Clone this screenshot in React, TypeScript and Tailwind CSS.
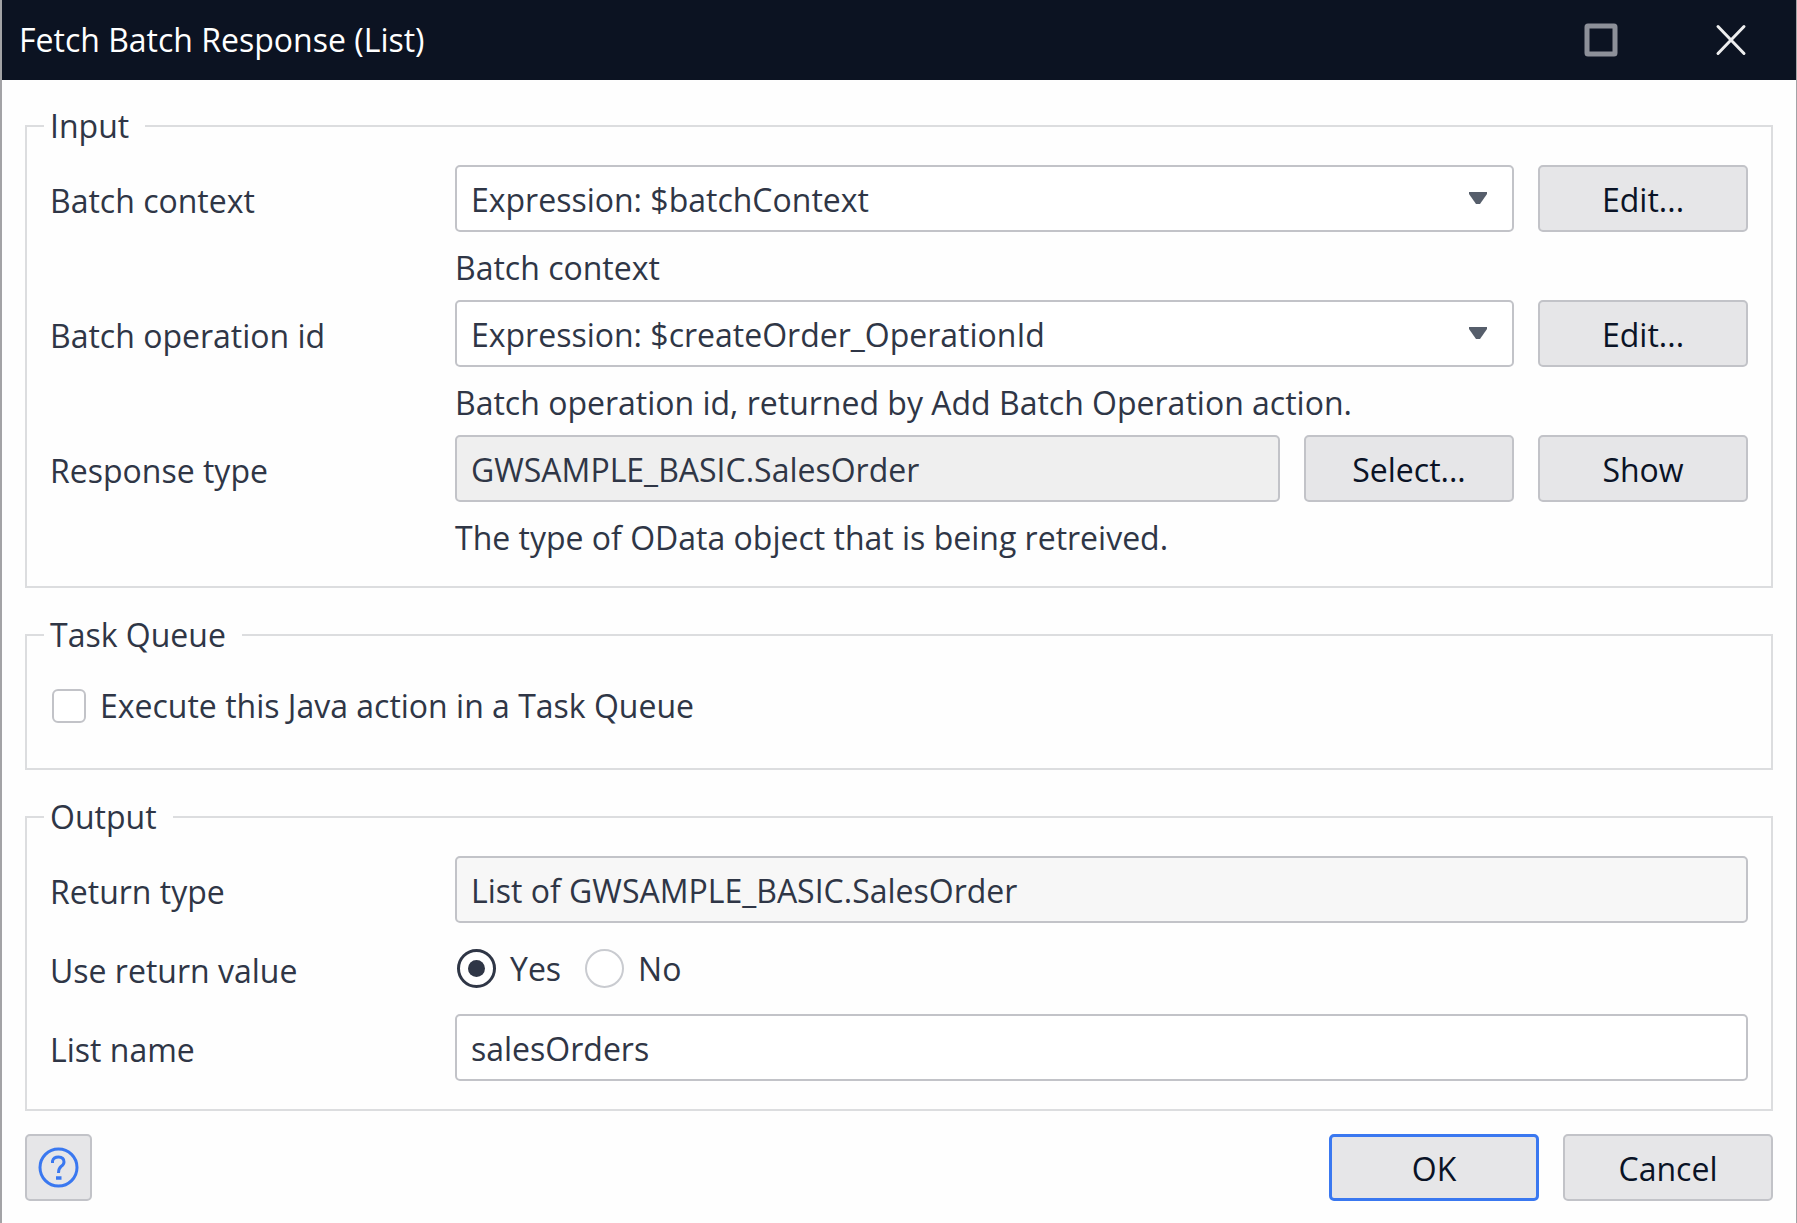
import type { ReactNode } from "react";

function Group({ title, children }: { title: string; children: ReactNode }) {
  return (
    <fieldset className="min-w-0 border-2 border-[#dcdddf] px-[17px] pb-4">
      <legend className="pl-[6px] pr-4 leading-10">{title}</legend>
      <div className="px-[6px] pt-[19px]">{children}</div>
    </fieldset>
  );
}

function Row({ children }: { children: ReactNode }) {
  return <div className="grid grid-cols-[405px_1fr]">{children}</div>;
}

function Button({ children, primary = false }: { children: ReactNode; primary?: boolean }) {
  return (
    <button
      type="button"
      className={
        "h-[67px] w-[210px] shrink-0 rounded-[5px] bg-[#e6e6e8] pt-[2px] text-[#0a1326] " +
        (primary ? "border-3 border-[#3a78f0]" : "border-2 border-[#c2c3c8]")
      }
    >
      {children}
    </button>
  );
}

function Combo({ id, value }: { id: string; value: string }) {
  return (
    <div className="relative min-w-0 flex-1">
      <select
        id={id}
        className="h-[67px] w-full appearance-none rounded-[5px] border-2 border-[#c2c3c8] bg-white pl-[14px] pr-16 pt-[2px]"
      >
        <option>{value}</option>
      </select>
      <svg
        className="pointer-events-none absolute right-[27px] top-[27px]"
        width="18"
        height="13"
        viewBox="0 0 18 13"
        aria-hidden="true"
      >
        <path d="M0 0H18V2L11 12H7L0 2Z" fill="#565e6b" />
      </svg>
    </div>
  );
}

const label = "pt-1 leading-[63px]";
const hint = "col-start-2 pt-1 leading-16";
const field = "h-[67px] w-full min-w-0 rounded-[5px] border-2 border-[#c2c3c8] px-[14px] pt-[2px]";
const radio =
  "grid size-[39px] shrink-0 appearance-none place-content-center rounded-full border-2 border-[#c9cbd0] bg-white before:size-[17px] before:rounded-full checked:border-[3px] checked:border-[#2f3646] checked:before:bg-[#2f3646]";

export default function App() {
  return (
    <div className="min-h-screen border-l-2 border-r border-[#a3a3a6] bg-[#fefefe] font-['Open_Sans','Noto_Sans',sans-serif] text-[32px] leading-10 text-[#2f3646]">
      <header className="flex h-20 items-center justify-between bg-[#0c1322] pl-[17px] pr-[49px] text-white">
        <h1 className="font-normal">Fetch Batch Response (List)</h1>
        <div className="flex items-center gap-[97px]">
          <button type="button" aria-label="Maximize">
            <svg className="block" width="34" height="34" viewBox="0 0 34 34">
              <rect x="3" y="3" width="28" height="28" rx="1" fill="none" stroke="#8d9099" strokeWidth="5" />
            </svg>
          </button>
          <button type="button" aria-label="Close">
            <svg className="block" width="32" height="32" viewBox="0 0 32 32">
              <path d="M3 2.500L29 29.500M29 2.500L3 29.500" stroke="#eeeeef" strokeWidth="3" strokeLinecap="round" />
            </svg>
          </button>
        </div>
      </header>

      <form className="flex flex-col px-[23px] pb-5 pt-[26px]">
        <div className="flex flex-col gap-[27px]">
          <Group title="Input">
            <Row>
              <label htmlFor="context" className={label}>Batch context</label>
              <div className="flex gap-6">
                <Combo id="context" value="Expression: $batchContext" />
                <Button>Edit...</Button>
              </div>
              <p className={hint}>Batch context</p>
            </Row>
            <Row>
              <label htmlFor="operation" className={label}>Batch operation id</label>
              <div className="flex gap-6">
                <Combo id="operation" value="Expression: $createOrder_OperationId" />
                <Button>Edit...</Button>
              </div>
              <p className={hint}>Batch operation id, returned by Add Batch Operation action.</p>
            </Row>
            <Row>
              <label htmlFor="response" className={label}>Response type</label>
              <div className="flex gap-6">
                <input id="response" readOnly value="GWSAMPLE_BASIC.SalesOrder" className={field + " bg-[#efefef]"} />
                <Button>Select...</Button>
                <Button>Show</Button>
              </div>
              <p className={hint}>The type of OData object that is being retreived.</p>
            </Row>
          </Group>

          <Group title="Task Queue">
            <label className="flex h-[78px] items-center gap-[14px] pb-[14px] pl-[2px]">
              <input
                type="checkbox"
                className="size-[34px] appearance-none rounded-[6px] border-2 border-[#c2c3c8] bg-white checked:bg-[#2f3646]"
              />
              Execute this Java action in a Task Queue
            </label>
          </Group>

          <Group title="Output">
            <div className="flex flex-col gap-3 pb-3">
              <Row>
                <label htmlFor="return-type" className={label}>Return type</label>
                <input
                  id="return-type"
                  readOnly
                  value="List of GWSAMPLE_BASIC.SalesOrder"
                  className={field + " bg-[#f7f7f7]"}
                />
              </Row>
              <div role="radiogroup" aria-labelledby="use-return">
                <Row>
                  <span id="use-return" className={label}>Use return value</span>
                  <div className="flex items-center gap-6 pl-[2px]">
                    <label className="flex items-center gap-[14px]">
                      <input type="radio" name="use" defaultChecked className={radio} />
                      Yes
                    </label>
                    <label className="flex items-center gap-[14px]">
                      <input type="radio" name="use" className={radio} />
                      No
                    </label>
                  </div>
                </Row>
              </div>
              <Row>
                <label htmlFor="list-name" className={label}>List name</label>
                <input id="list-name" defaultValue="salesOrders" className={field + " bg-white"} />
              </Row>
            </div>
          </Group>
        </div>

        <footer className="flex items-center justify-between pt-[23px]">
          <button
            type="button"
            aria-label="Help"
            className="grid size-[67px] place-content-center rounded-[5px] border-2 border-[#c2c3c8] bg-[#e6e6e8]"
          >
            <svg width="41" height="41" viewBox="0 0 41 41" fill="none" stroke="#3a78f0">
              <circle cx="20.5" cy="20.5" r="18.5" strokeWidth="3" />
              <path d="M14.500 16V14Q15.500 10 20.500 10Q26 10 26 15Q26 17.500 23 19.500Q20.500 21.500 20.500 26" strokeWidth="3" />
              <path d="M18 31H23.500" strokeWidth="3.500" />
            </svg>
          </button>
          <div className="flex gap-6">
            <Button primary>OK</Button>
            <Button>Cancel</Button>
          </div>
        </footer>
      </form>
    </div>
  );
}
